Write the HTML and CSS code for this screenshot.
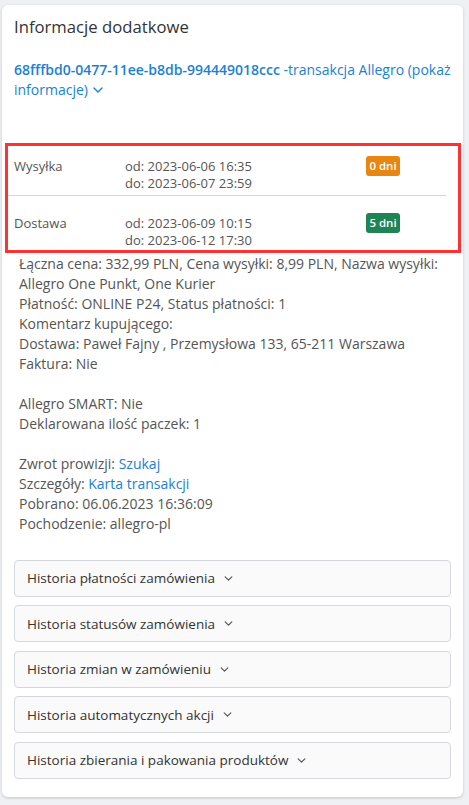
FILE: index.html
```html
<!DOCTYPE html>
<html lang="pl">
<head>
  <meta charset="UTF-8" />
  <meta name="viewport" content="width=device-width, initial-scale=1" />
  <title>Informacje dodatkowe</title>
  <link rel="stylesheet" href="styles.css">
</head>
<body>
  <div class="card">
    <h3 class="card-title">Informacje dodatkowe</h3>

    <a class="transaction-link" href="#"><span class="hash">68fffbd0-0477-11ee-b8db-994449018ccc</span> -transakcja Allegro (pokaż informacje)
      <svg class="chevron" width="10" height="6" viewBox="0 0 10 6"><path d="M1 1l4 4 4-4" /></svg>
    </a>

    <div class="highlight">
      <table class="dates">
        <tr class="row-first">
          <td class="label">Wysyłka</td>
          <td class="range">od: 2023-06-06 16:35<br>do: 2023-06-07 23:59</td>
          <td class="badge-cell"><span class="badge badge-orange">0 dni</span></td>
        </tr>
        <tr class="row-second">
          <td class="label">Dostawa</td>
          <td class="range">od: 2023-06-09 10:15<br>do: 2023-06-12 17:30</td>
          <td class="badge-cell"><span class="badge badge-green">5 dni</span></td>
        </tr>
      </table>
    </div>

    <div class="details">
      Łączna cena: 332,99 PLN, Cena wysyłki: 8,99 PLN, Nazwa wysyłki: Allegro One Punkt, One Kurier<br>
      Płatność: ONLINE P24, Status płatności: 1<br>
      Komentarz kupującego:<br>
      Dostawa: Paweł Fajny , Przemysłowa 133, 65-211 Warszawa<br>
      Faktura: Nie<br>
      <br>
      Allegro SMART: Nie<br>
      Deklarowana ilość paczek: 1<br>
      <br>
      Zwrot prowizji: <a href="#">Szukaj</a><br>
      Szczegóły: <a href="#">Karta transakcji</a><br>
      Pobrano: 06.06.2023 16:36:09<br>
      Pochodzenie: allegro-pl
    </div>

    <div class="history">
      <div class="history-item">Historia płatności zamówienia
        <svg class="chevron" width="9" height="5" viewBox="0 0 10 6"><path d="M1 1l4 4 4-4" /></svg>
      </div>
      <div class="history-item">Historia statusów zamówienia
        <svg class="chevron" width="9" height="5" viewBox="0 0 10 6"><path d="M1 1l4 4 4-4" /></svg>
      </div>
      <div class="history-item">Historia zmian w zamówieniu
        <svg class="chevron" width="9" height="5" viewBox="0 0 10 6"><path d="M1 1l4 4 4-4" /></svg>
      </div>
      <div class="history-item">Historia automatycznych akcji
        <svg class="chevron" width="9" height="5" viewBox="0 0 10 6"><path d="M1 1l4 4 4-4" /></svg>
      </div>
      <div class="history-item">Historia zbierania i pakowania produktów
        <svg class="chevron" width="9" height="5" viewBox="0 0 10 6"><path d="M1 1l4 4 4-4" /></svg>
      </div>
    </div>
  </div>
</body>
</html>
```

FILE: styles.css
```css
body {
  margin: 0;
  padding: 5px 6px 8px 2px;
  background: #eef0f3;
  font-family: "Open Sans", Arial, sans-serif;
  color: #555;
}
.card {
  background: #fff;
  border-radius: 6px;
  box-shadow: 0 1px 3px rgba(0, 0, 0, 0.18);
  padding: 12px 12px 18px 12px;
}
.card-title {
  margin: 0;
  font-size: 16.7px;
  font-weight: 400;
  line-height: 20px;
  color: #333;
}
.transaction-link {
  display: block;
  margin-top: 23px;
  font-size: 14px;
  line-height: 20px;
  color: #1a80d8;
  text-decoration: none;
}
.transaction-link .hash {
  font-weight: 600;
}
.transaction-link .chevron {
  margin-left: 1px;
  vertical-align: 2px;
}
.chevron path {
  fill: none;
  stroke: currentColor;
  stroke-width: 1.4;
  stroke-linecap: round;
  stroke-linejoin: round;
}
.highlight {
  margin: 43px -10px 0 -9px;
  border: 3px solid #ff3131;
}
.dates {
  width: calc(100% - 12px);
  border-collapse: collapse;
  font-size: 13px;
  line-height: 17px;
  color: #555;
}
.dates td {
  vertical-align: top;
  padding: 0;
}
.dates .label {
  width: 111px;
  padding-left: 6px;
}
.dates .range {
  width: 241px;
}
.row-first td {
  padding-top: 11.5px;
  padding-bottom: 3px;
  border-bottom: 1px solid #d3d6da;
}
.row-second td {
  padding-top: 19.5px;
  padding-bottom: 0.5px;
}
.badge {
  display: inline-block;
  width: 34px;
  height: 20px;
  margin-top: -1.5px;
  border-radius: 3px;
  color: #fff;
  font-size: 11.5px;
  font-weight: 600;
  line-height: 20px;
  text-align: center;
  vertical-align: top;
}
.row-second .badge {
  margin-top: -2.5px;
}
.badge-orange {
  background: #e8870f;
}
.badge-green {
  background: #1e8453;
}
.details {
  margin-top: 1px;
  padding-left: 5px;
  font-size: 14px;
  line-height: 20px;
  color: #555;
}
.details a {
  color: #1a80d8;
  text-decoration: none;
}
.history {
  margin-top: 26px;
}
.history-item {
  height: 37px;
  box-sizing: border-box;
  margin-bottom: 8.6px;
  padding: 0 12px;
  display: flex;
  align-items: center;
  gap: 9px;
  background: #fafafa;
  border: 1px solid #d5d9de;
  border-radius: 4px;
  font-size: 13.5px;
  color: #333;
}
.history-item:last-child {
  margin-bottom: 0;
}
.history-item .chevron {
  color: #555;
}
```
